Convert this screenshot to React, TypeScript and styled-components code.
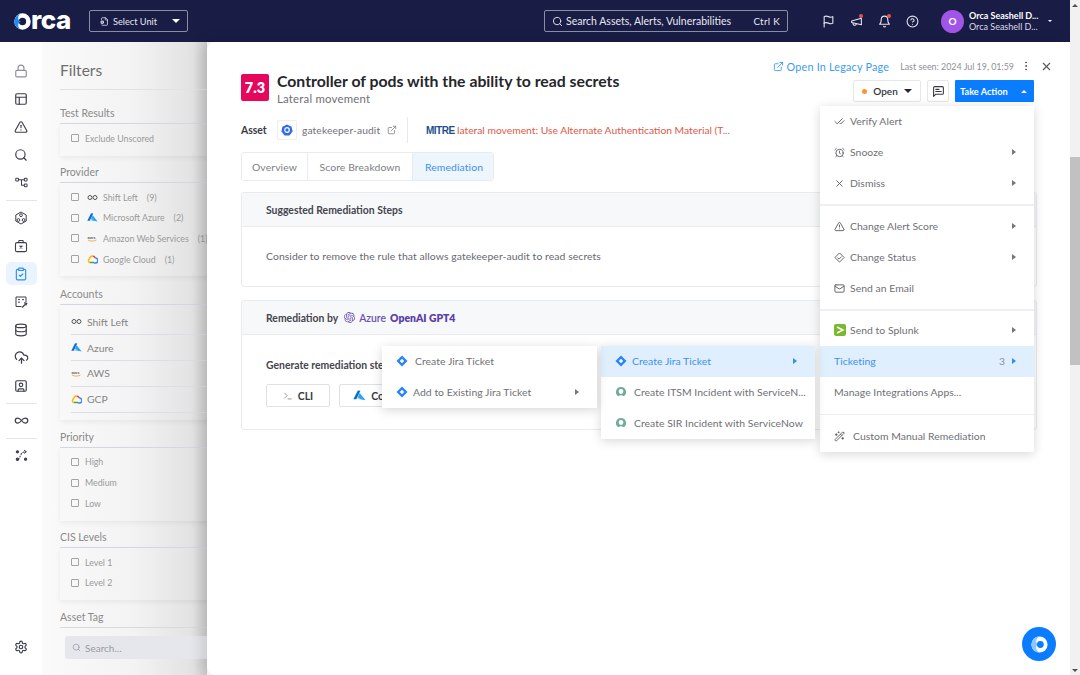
import React from "react";
import styled, { createGlobalStyle } from "styled-components";
import {
  LuLock,
  LuPanelsTopLeft,
  LuTriangleAlert,
  LuSearch,
  LuClipboardCheck,
  LuDatabase,
  LuCloudUpload,
  LuSquareUser,
  LuInfinity,
  LuSettings,
  LuFlag,
  LuMegaphone,
  LuBell,
  LuCircleHelp,
  LuExternalLink,
  LuEllipsisVertical,
  LuX,
  LuMessageSquareText,
  LuCheckCheck,
  LuAlarmClock,
  LuMail,
  LuWandSparkles,
  LuTerminal,
  LuFileCog,
} from "react-icons/lu";
import { SiOpenai } from "react-icons/si";

const font = `"Lato", "Noto Sans", sans-serif`;

const GlobalStyle = createGlobalStyle`
  html, body {
    margin: 0;
    height: 100%;
    overflow: hidden;
    background: #fff;
    font-family: ${font};
  }
  * { box-sizing: border-box; }
`;

const Page = styled.div`
  width: 1080px;
  height: 675px;
  display: flex;
  position: relative;
  overflow: hidden;
`;

const Main = styled.div`
  width: 1070px;
  flex: none;
  display: flex;
  flex-direction: column;
`;

const Scrollbar = styled.div`
  width: 10px;
  height: 675px;
  background: #f1f1f1;
  padding-top: 157px;
  position: relative;
  &::before,
  &::after {
    content: "";
    position: absolute;
    left: 2px;
    border-left: 3px solid transparent;
    border-right: 3px solid transparent;
  }
  &::before {
    top: 4px;
    border-bottom: 3px solid #505050;
  }
  &::after {
    bottom: 3px;
    border-top: 3px solid #505050;
  }
`;

const ScrollThumb = styled.div`
  width: 100%;
  height: 208px;
  background: #c1c1c1;
`;

const TopBar = styled.header`
  height: 42px;
  flex: none;
  background: #191c44;
  display: flex;
  align-items: center;
  padding: 0 0 0 14px;
  color: #fff;
`;

const LogoText = styled.div`
  display: flex;
  align-items: center;
  width: 75px;
  font-size: 26px;
  line-height: 26px;
  font-weight: 800;
  color: #fff;
  letter-spacing: -0.4px;
  font-family: "Inter", sans-serif;
  span {
    margin-top: -3px;
  }
`;

const UnitSelect = styled.div`
  width: 99px;
  height: 22px;
  border: 1px solid #8a8da6;
  border-radius: 2px;
  display: flex;
  align-items: center;
  padding: 0 7px 0 10px;
  gap: 4px;
  font-size: 9.2px;
  color: #e6e7ef;
  span:nth-child(2) {
    flex: 1;
  }
`;

const Caret = styled.span<{ $dir?: "down" | "up" | "right"; $color?: string; $size?: number }>`
  display: inline-block;
  width: 0;
  height: 0;
  flex: none;
  ${(p) => {
    const s = p.$size ?? 3;
    const c = p.$color ?? "#fff";
    if (p.$dir === "up")
      return `border-left:${s + 1}px solid transparent;border-right:${s + 1}px solid transparent;border-bottom:${s + 1}px solid ${c};`;
    if (p.$dir === "right")
      return `border-top:${s}px solid transparent;border-bottom:${s}px solid transparent;border-left:${s + 1}px solid ${c};`;
    return `border-left:${s + 1}px solid transparent;border-right:${s + 1}px solid transparent;border-top:${s + 1}px solid ${c};`;
  }}
`;

const SearchBox = styled.div`
  width: 244px;
  height: 22px;
  margin-left: 356px;
  border: 1px solid #8a8da6;
  border-radius: 2px;
  display: flex;
  align-items: center;
  padding: 0 7px;
  gap: 3px;
  font-size: 10.5px;
  color: #e8e9f0;
  span:last-child {
    margin-left: auto;
    font-size: 9.8px;
    letter-spacing: 0.3px;
  }
`;

const TopIcons = styled.div`
  display: flex;
  align-items: center;
  gap: 15px;
  margin-left: 34px;
  margin-right: 22px;
  color: #e4e5ee;
`;

const TopIcon = styled.span<{ $dot?: boolean }>`
  position: relative;
  display: flex;
  width: 13px;
  justify-content: center;
  ${(p) =>
    p.$dot &&
    `&::after{content:"";position:absolute;top:-1px;right:0;width:4px;height:4px;border-radius:50%;background:#e8534a;}`}
`;

const Avatar = styled.div`
  width: 23px;
  height: 23px;
  border-radius: 50%;
  background: #a055e6;
  font-size: 10px;
  font-weight: 700;
  display: flex;
  align-items: center;
  justify-content: center;
  margin-right: 5px;
`;

const UserBlock = styled.div`
  display: flex;
  flex-direction: column;
  width: 79px;
  font-size: 9px;
  line-height: 11px;
  strong {
    font-weight: 700;
  }
  span {
    color: #dadbe6;
  }
`;

const Body = styled.div`
  flex: 1;
  display: flex;
  min-height: 0;
`;

const SideNav = styled.nav`
  width: 42px;
  flex: none;
  background: #fff;
  display: flex;
  flex-direction: column;
  align-items: center;
  padding-top: 17px;
  position: relative;
  color: #3c3f4c;
`;

const NavItem = styled.div<{ $active?: boolean; $muted?: boolean }>`
  width: 31px;
  height: 23px;
  margin-bottom: 5px;
  border-radius: 5px;
  flex: none;
  display: flex;
  align-items: center;
  justify-content: center;
  background: ${(p) => (p.$active ? "#eaf4fe" : "transparent")};
  color: ${(p) => (p.$active ? "#2f8fef" : p.$muted ? "#8d8f99" : "#3c3f4c")};
`;

const NavRule = styled.div`
  width: 31px;
  height: 1px;
  background: #e3e5ee;
  flex: none;
  margin: 1px 0 5px;
`;

const NavBottom = styled.div`
  margin-top: auto;
  margin-bottom: 12px;
`;

const FilterPane = styled.aside`
  width: 165px;
  flex: none;
  overflow: hidden;
  padding: 18px 0 0 18px;
  background: linear-gradient(90deg, #fafafa 0%, #f3f3f3 55%, #e2e2e2 92%, #cfcfcf 100%);
  color: #8f8f8f;
`;

const FilterTitle = styled.div`
  font-size: 15.5px;
  color: #6e6e6e;
  line-height: 20px;
  width: 160px;
  padding-bottom: 9px;
  border-bottom: 1px solid #e2e2e6;
  margin-bottom: 16px;
`;

const GroupTitle = styled.div`
  font-size: 10.5px;
  color: #8a8a8a;
  line-height: 14px;
  width: 160px;
  padding-bottom: 3px;
  border-bottom: 1px solid #d7d8e2;
`;

const GroupCard = styled.div<{ $gap?: number }>`
  width: 190px;
  padding: 4px 0 7px 11px;
  margin-bottom: ${(p) => p.$gap ?? 10}px;
  box-shadow: 0 2px 5px rgba(0, 0, 0, 0.06);
`;

const CheckRow = styled.div`
  height: 20.7px;
  display: flex;
  align-items: center;
  gap: 5px;
  font-size: 8.8px;
  color: #9a9a9a;
  white-space: nowrap;
  em {
    font-style: normal;
    margin-left: 4px;
  }
`;

const Box = styled.span`
  width: 8px;
  height: 8px;
  flex: none;
  border: 1px solid #a3a3a3;
  border-radius: 1px;
  margin-right: 1px;
  background: #f8f8f8;
`;

const ProviderIcon = styled.span`
  width: 11px;
  margin-left: 2px;
  flex: none;
  display: flex;
  align-items: center;
  justify-content: center;
`;

const AccountRow = styled.div`
  height: 25.8px;
  display: flex;
  align-items: center;
  gap: 5px;
  font-size: 10.4px;
  color: #858585;
  border-bottom: 1px solid #dcdde5;
`;

const SearchField = styled.div`
  width: 150px;
  height: 23px;
  margin: 8px 0 0 5px;
  background: #e6e7ec;
  border-radius: 3px;
  display: flex;
  align-items: center;
  gap: 4px;
  padding: 0 7px;
  font-size: 10px;
  color: #9a9a9f;
`;

const Drawer = styled.main`
  flex: 1;
  min-width: 0;
  background: #fff;
  border-radius: 8px 0 0 8px;
  padding: 15px 33px 0 34px;
  box-shadow: -6px 0 14px rgba(0, 0, 0, 0.12);
  position: relative;
  color: #2b2b33;
`;

const DrawerTopLine = styled.div`
  display: flex;
  align-items: center;
  justify-content: flex-end;
  height: 18px;
  margin-right: -22px;
  gap: 0;
`;

const LegacyLink = styled.a`
  display: flex;
  align-items: center;
  gap: 3px;
  color: #3d9bf2;
  font-size: 10.8px;
  letter-spacing: 0.2px;
`;

const LastSeen = styled.span`
  font-size: 8.9px;
  color: #8f8f95;
  margin: 0 5px 0 11px;
`;

const IconBtn = styled.span`
  display: flex;
  color: #55565f;
  width: 14px;
  justify-content: center;
  margin-right: 6px;
`;

const HeadRow = styled.div`
  display: flex;
  justify-content: space-between;
  margin-top: -1px;
`;

const TitleWrap = styled.div`
  display: flex;
  gap: 8px;
`;

const TitleText = styled.div`
  margin-top: -2px;
`;

const ScoreBadge = styled.div`
  width: 28px;
  height: 27px;
  border-radius: 2px;
  background: #e6065c;
  color: #fff;
  font-size: 14.5px;
  font-weight: 800;
  display: flex;
  align-items: center;
  justify-content: center;
`;

const AlertTitle = styled.div`
  font-size: 15.8px;
  font-weight: 700;
  line-height: 18px;
  color: #25252c;
`;

const AlertSub = styled.div`
  font-size: 11.4px;
  line-height: 15px;
  margin-top: 1px;
  color: #6f6f76;
  letter-spacing: 0.2px;
`;

const Actions = styled.div`
  display: flex;
  gap: 6px;
  margin-top: 6px;
  margin-right: 3px;
  height: 22px;
`;

const OpenBtn = styled.div`
  width: 68px;
  border: 1px solid #e6e7ec;
  border-radius: 2px;
  display: flex;
  align-items: center;
  justify-content: center;
  gap: 6px;
  font-size: 10px;
  font-weight: 600;
  color: #33333b;
  i {
    width: 5px;
    height: 5px;
    border-radius: 50%;
    background: #f8943a;
  }
`;

const NoteBtn = styled.div`
  width: 22px;
  border: 1px solid #e6e7ec;
  border-radius: 2px;
  display: flex;
  align-items: center;
  justify-content: center;
  color: #3a3a42;
`;

const TakeAction = styled.div`
  width: 79px;
  background: #0a7cff;
  border-radius: 1px;
  color: #fff;
  font-size: 9.2px;
  font-weight: 700;
  display: flex;
  align-items: center;
  justify-content: space-between;
  padding: 0 7px 0 5px;
`;

const AssetRow = styled.div`
  display: flex;
  align-items: center;
  height: 26px;
  margin-top: 11px;
`;

const AssetLabel = styled.span`
  font-size: 10.4px;
  font-weight: 700;
  color: #3a3a42;
  width: 36px;
`;

const K8sBox = styled.span`
  width: 20px;
  height: 20px;
  border: 1px solid #eceef2;
  border-radius: 2px;
  display: flex;
  align-items: center;
  justify-content: center;
  margin-right: 5px;
`;

const AssetName = styled.span`
  font-size: 10.2px;
  color: #707077;
  width: 85px;
  letter-spacing: 0.15px;
`;

const RowDivider = styled.span`
  width: 1px;
  height: 26px;
  background: #e8e9ee;
  margin: 0 18px 0 10px;
`;

const MitreLogo = styled.span`
  font-size: 10px;
  font-weight: 900;
  color: #1c4f8f;
  letter-spacing: -0.5px;
  font-family: "Liberation Sans", sans-serif;
  width: 31px;
`;

const MitreText = styled.span`
  font-size: 10.3px;
  color: #db5a48;
  white-space: nowrap;
`;

const Tabs = styled.div`
  display: flex;
  width: 253px;
  height: 29px;
  margin-top: 9px;
  border: 1px solid #e9ebf0;
  border-radius: 3px;
  overflow: hidden;
`;

const Tab = styled.div<{ $active?: boolean; $w: number }>`
  width: ${(p) => p.$w}px;
  flex: none;
  display: flex;
  align-items: center;
  justify-content: center;
  font-size: 10.4px;
  letter-spacing: 0.1px;
  color: ${(p) => (p.$active ? "#3d8ff0" : "#7d7d84")};
  background: ${(p) => (p.$active ? "#edf5fd" : "#fff")};
  border-right: ${(p) => (p.$active ? "none" : "1px solid #e9ebf0")};
`;

const Card = styled.section<{ $h: number; $top: number }>`
  height: ${(p) => p.$h}px;
  margin-top: ${(p) => p.$top}px;
  border: 1px solid #e9ebf0;
  border-radius: 3px;
  overflow: hidden;
`;

const CardHead = styled.div`
  height: 34px;
  background: #f7f8fa;
  border-bottom: 1px solid #e9ebf0;
  padding-left: 24px;
  display: flex;
  align-items: center;
  gap: 6px;
  font-size: 10.4px;
  font-weight: 700;
  color: #45454d;
`;

const OpenAi = styled.span`
  display: flex;
  align-items: center;
  gap: 4px;
  color: #6a4fb8;
  font-weight: 600;
  b {
    font-weight: 800;
    color: #5b3fa8;
  }
`;

const CardText = styled.div`
  padding: 22px 0 0 24px;
  font-size: 10.4px;
  line-height: 14px;
  color: #67676f;
  letter-spacing: 0.08px;
`;

const GenTitle = styled.div`
  padding: 23px 0 0 24px;
  font-size: 10.4px;
  line-height: 14px;
  font-weight: 700;
  color: #45454d;
`;

const GenButtons = styled.div`
  display: flex;
  gap: 9px;
  padding: 12px 0 0 24px;
`;

const GenBtn = styled.div<{ $w: number }>`
  width: ${(p) => p.$w}px;
  height: 23px;
  border: 1px solid #dfe1e8;
  border-radius: 2px;
  display: flex;
  align-items: center;
  justify-content: center;
  gap: 5px;
  font-size: 10.4px;
  font-weight: 700;
  color: #3a3a42;
`;

const Menu = styled.div<{ $left: number; $top: number; $w: number }>`
  position: absolute;
  left: ${(p) => p.$left}px;
  top: ${(p) => p.$top}px;
  width: ${(p) => p.$w}px;
  background: #fff;
  box-shadow: 0 2px 10px rgba(0, 0, 0, 0.16);
  z-index: 5;
`;

const MenuItem = styled.div<{ $active?: boolean }>`
  height: 31px;
  display: flex;
  align-items: center;
  padding: 0 18px 1px 14px;
  font-size: 10.4px;
  letter-spacing: 0.04px;
  white-space: nowrap;
  color: ${(p) => (p.$active ? "#3d8ff0" : "#6f6f76")};
  background: ${(p) => (p.$active ? "#e0effd" : "transparent")};
`;

const MenuIcon = styled.span<{ $w?: number }>`
  width: ${(p) => p.$w ?? 16}px;
  flex: none;
  display: flex;
  align-items: center;
  color: #5b5b63;
`;

const MenuLabel = styled.span`
  flex: 1;
`;

const MenuCount = styled.span`
  color: #8f8f95;
  margin-right: 7px;
`;

const MenuRule = styled.div<{ $h?: number; $my?: number }>`
  height: ${(p) => p.$h ?? 1}px;
  background: #eeeff3;
  margin: ${(p) => p.$my ?? 6}px 0;
`;

const ChatFab = styled.div`
  position: absolute;
  left: 1022px;
  top: 627px;
  width: 34px;
  height: 34px;
  border-radius: 50%;
  background: #0a7cff;
  display: flex;
  align-items: center;
  justify-content: center;
  z-index: 6;
`;

const OrcaGlyph = ({ size }: { size: number }) => (
  <svg width={size} height={size} viewBox="0 0 20 20">
    <circle cx="10" cy="10" r="9.5" fill="#fff" />
    <path d="M10 .5a9.5 9.5 0 0 0 0 19 6 6 0 0 1-2.6-9.5A6 6 0 0 1 10 .5z" fill="#8cc6fb" />
    <circle cx="11" cy="10" r="4" fill="#0a7cff" />
  </svg>
);

const JiraIcon = ({ size = 12 }: { size?: number }) => (
  <svg width={size} height={size} viewBox="0 0 12 12">
    <path d="M6 .5 11.5 6 6 11.5.5 6z" fill="#2684ff" />
    <rect x="4.4" y="4.4" width="3.2" height="3.2" rx="0.4" transform="rotate(45 6 6)" fill="#fff" />
  </svg>
);

const SnowIcon = () => (
  <svg width="12" height="12" viewBox="0 0 12 12">
    <path
      d="M6 1a5 5 0 0 0-3.4 8.7c.4.3.9.4 1.3.1A3.6 3.6 0 0 1 6 9.2c.8 0 1.5.2 2.1.6.4.3 1 .2 1.3-.1A5 5 0 0 0 6 1zm0 6.9a2.4 2.4 0 1 1 0-4.8 2.4 2.4 0 0 1 0 4.8z"
      fill="#71ab96"
    />
  </svg>
);

const AzureIcon = ({ size = 11 }: { size?: number }) => (
  <svg width={size} height={size} viewBox="0 0 14 12">
    <path d="M5.2 0.6 0.4 10h3.2L8 1z" fill="#0a6ed1" />
    <path d="M7.2 3.2 5 8.2l3.2 1H3.4L13.6 11 7.2 3.2z" fill="#2aa4ee" />
  </svg>
);

const AwsIcon = () => (
  <svg width="11" height="9" viewBox="0 0 22 16">
    <text x="1" y="8" fontSize="8.5" fontWeight="700" fill="#666" fontFamily="Liberation Sans">
      aws
    </text>
    <path d="M2 11c5 3 11 3 17 0" stroke="#f29a2e" strokeWidth="1.6" fill="none" />
  </svg>
);

const GcpIcon = () => (
  <svg width="11" height="9" viewBox="0 0 22 16">
    <path d="M11 1a6 6 0 0 1 5.6 4" stroke="#ea4335" strokeWidth="3" fill="none" />
    <path d="M16.5 5A5 5 0 0 1 17 15h-3" stroke="#4285f4" strokeWidth="3" fill="none" />
    <path d="M14 14H6" stroke="#34a853" strokeWidth="3" fill="none" />
    <path d="M6 14.5A4.6 4.6 0 0 1 5.4 6 6 6 0 0 1 11 1" stroke="#fbbc05" strokeWidth="3" fill="none" />
  </svg>
);

const ShiftLeftIcon = () => (
  <svg width="11" height="7" viewBox="0 0 22 12" fill="none" stroke="#555" strokeWidth="2">
    <circle cx="6" cy="6" r="4" />
    <circle cx="16" cy="6" r="4" />
  </svg>
);

const SplunkIcon = () => (
  <svg width="12" height="12" viewBox="0 0 12 12">
    <rect width="12" height="12" rx="2" fill="#7cb82f" />
    <path d="M3 3l6 3-6 3" stroke="#fff" strokeWidth="1.4" fill="none" />
  </svg>
);

const K8sIcon = () => (
  <svg width="12" height="12" viewBox="0 0 12 12">
    <path d="M6 .5 10.6 2.8 11.6 7.6 8.4 11.5H3.6L.4 7.6 1.4 2.8z" fill="#326ce5" />
    <circle cx="6" cy="6" r="2.3" fill="none" stroke="#fff" strokeWidth="1.2" />
  </svg>
);

const StatusIcon = () => (
  <svg width="11" height="11" viewBox="0 0 12 12" fill="none" stroke="#5b5b63" strokeWidth="1">
    <path d="M6 1 11 6 6 11 1 6z" strokeLinejoin="round" />
    <path d="M3.8 6.2 5.5 7.8 8.2 5" />
  </svg>
);

const NodeFlowIcon = () => (
  <svg width="13" height="13" viewBox="0 0 14 14" fill="none" stroke="currentColor" strokeWidth="1.1">
    <rect x="0.8" y="2.5" width="3" height="3" rx="0.8" />
    <rect x="10" y="2.5" width="3" height="3" rx="0.8" />
    <rect x="10" y="8.5" width="3" height="3" rx="0.8" />
    <path d="M3.8 4H10M7 4v6h3" />
  </svg>
);

const HexNetIcon = () => (
  <svg width="14" height="14" viewBox="0 0 14 14" fill="none" stroke="currentColor" strokeWidth="1">
    <path d="M7 1 12.2 4v6L7 13 1.8 10V4z" strokeLinejoin="round" />
    <circle cx="7" cy="4.2" r="1.4" />
    <circle cx="4.4" cy="9" r="1.4" />
    <circle cx="9.6" cy="9" r="1.4" />
  </svg>
);

const BriefcaseXIcon = () => (
  <svg width="14" height="14" viewBox="0 0 14 14" fill="none" stroke="currentColor" strokeWidth="1.1">
    <rect x="1.5" y="3.6" width="11" height="9" rx="1.4" />
    <path d="M4.8 3.6V2.2c0-.4.3-.7.7-.7h3c.4 0 .7.3.7.7v1.4" />
    <path d="M5.6 6.8 8.4 9.4M8.4 6.8 5.6 9.4" strokeWidth="1.2" />
  </svg>
);

const ReportToolIcon = () => (
  <svg width="14" height="14" viewBox="0 0 14 14" fill="none" stroke="currentColor" strokeWidth="1">
    <path d="M7.5 11.5H2V2h10v5" />
    <path d="M4 4.6h2M4 7.2h2M8 4.6h2" />
    <path d="M8.2 12.6 11 9.4M10.2 7.8l2.4.6-1 2" strokeWidth="1.4" />
  </svg>
);

const RoutePathIcon = () => (
  <svg width="13" height="13" viewBox="0 0 14 14" fill="none" stroke="currentColor" strokeWidth="1.1">
    <path d="M3 11c3 0 2-8 8-8" strokeDasharray="2 1" />
    <circle cx="2.6" cy="11" r="1.3" fill="currentColor" />
    <path d="M9.8 1.2 12 3 9.8 4.8" />
    <circle cx="2.6" cy="3" r="1.2" fill="currentColor" />
    <circle cx="11.4" cy="11" r="1.2" fill="currentColor" />
  </svg>
);

const MenuArrow = ({ color = "#75757c" }: { color?: string }) => (
  <Caret $dir="right" $size={3} $color={color} />
);

export default function App() {
  const navTop = [
    { icon: <LuLock size={14} />, muted: true },
    { icon: <LuPanelsTopLeft size={14} /> },
    { icon: <LuTriangleAlert size={14} /> },
    { icon: <LuSearch size={14} /> },
    { icon: <NodeFlowIcon /> },
  ];
  const navMid = [
    { icon: <HexNetIcon /> },
    { icon: <BriefcaseXIcon /> },
    { icon: <LuClipboardCheck size={14} />, active: true },
    { icon: <ReportToolIcon /> },
    { icon: <LuDatabase size={14} /> },
    { icon: <LuCloudUpload size={15} /> },
    { icon: <LuSquareUser size={14} /> },
  ];

  return (
    <Page>
      <GlobalStyle />
      <Main>
        <TopBar>
          <LogoText>
            <svg width="17" height="17" viewBox="0 0 20 20">
              <circle cx="10" cy="10" r="7" fill="none" stroke="#fff" strokeWidth="5.4" />
              <path d="M10 .4a9.6 9.6 0 0 0 0 19.2 5 5 0 0 1-2-9.6 5 5 0 0 1 2-9.6z" fill="#1c8cf2" />
            </svg>
            <span>rca</span>
          </LogoText>
          <UnitSelect>
            <LuFileCog size={9} />
            <span>Select Unit</span>
            <Caret />
          </UnitSelect>
          <SearchBox>
            <LuSearch size={11} />
            <span>Search Assets, Alerts, Vulnerabilities</span>
            <span>Ctrl K</span>
          </SearchBox>
          <TopIcons>
            <TopIcon>
              <LuFlag size={13} />
            </TopIcon>
            <TopIcon $dot>
              <LuMegaphone size={13} />
            </TopIcon>
            <TopIcon $dot>
              <LuBell size={13} />
            </TopIcon>
            <TopIcon>
              <LuCircleHelp size={13} />
            </TopIcon>
          </TopIcons>
          <Avatar>O</Avatar>
          <UserBlock>
            <strong>Orca Seashell D...</strong>
            <span>Orca Seashell D...</span>
          </UserBlock>
          <Caret $size={1.5} />
        </TopBar>
        <Body>
          <SideNav>
            {navTop.map((n, i) => (
              <NavItem key={i} $muted={n.muted}>
                {n.icon}
              </NavItem>
            ))}
            <NavRule />
            {navMid.map((n, i) => (
              <NavItem key={i} $active={n.active}>
                {n.icon}
              </NavItem>
            ))}
            <NavRule />
            <NavItem>
              <LuInfinity size={15} />
            </NavItem>
            <NavRule />
            <NavItem>
              <RoutePathIcon />
            </NavItem>
            <NavBottom>
              <NavItem>
                <LuSettings size={14} />
              </NavItem>
            </NavBottom>
          </SideNav>

          <FilterPane>
            <FilterTitle>Filters</FilterTitle>
            <GroupTitle>Test Results</GroupTitle>
            <GroupCard $gap={9}>
              <CheckRow>
                <Box />
                Exclude Unscored
              </CheckRow>
            </GroupCard>
            <GroupTitle>Provider</GroupTitle>
            <GroupCard $gap={11}>
              <CheckRow>
                <Box />
                <ProviderIcon>
                  <ShiftLeftIcon />
                </ProviderIcon>
                Shift Left <em>(9)</em>
              </CheckRow>
              <CheckRow>
                <Box />
                <ProviderIcon>
                  <AzureIcon />
                </ProviderIcon>
                Microsoft Azure <em>(2)</em>
              </CheckRow>
              <CheckRow>
                <Box />
                <ProviderIcon>
                  <AwsIcon />
                </ProviderIcon>
                Amazon Web Services <em>(1)</em>
              </CheckRow>
              <CheckRow>
                <Box />
                <ProviderIcon>
                  <GcpIcon />
                </ProviderIcon>
                Google Cloud <em>(1)</em>
              </CheckRow>
            </GroupCard>
            <GroupTitle>Accounts</GroupTitle>
            <GroupCard>
              <AccountRow>
                <ShiftLeftIcon />
                Shift Left
              </AccountRow>
              <AccountRow>
                <AzureIcon />
                Azure
              </AccountRow>
              <AccountRow>
                <AwsIcon />
                AWS
              </AccountRow>
              <AccountRow>
                <GcpIcon />
                GCP
              </AccountRow>
            </GroupCard>
            <GroupTitle>Priority</GroupTitle>
            <GroupCard $gap={9}>
              <CheckRow>
                <Box />
                High
              </CheckRow>
              <CheckRow>
                <Box />
                Medium
              </CheckRow>
              <CheckRow>
                <Box />
                Low
              </CheckRow>
            </GroupCard>
            <GroupTitle>CIS Levels</GroupTitle>
            <GroupCard>
              <CheckRow>
                <Box />
                Level 1
              </CheckRow>
              <CheckRow>
                <Box />
                Level 2
              </CheckRow>
            </GroupCard>
            <GroupTitle>Asset Tag</GroupTitle>
            <SearchField>
              <LuSearch size={9} />
              Search...
            </SearchField>
          </FilterPane>

          <Drawer>
            <DrawerTopLine>
              <LegacyLink>
                <LuExternalLink size={11} />
                Open In Legacy Page
              </LegacyLink>
              <LastSeen>Last seen: 2024 Jul 19, 01:59</LastSeen>
              <IconBtn>
                <LuEllipsisVertical size={12} />
              </IconBtn>
              <IconBtn>
                <LuX size={13} />
              </IconBtn>
            </DrawerTopLine>
            <HeadRow>
              <TitleWrap>
                <ScoreBadge>7.3</ScoreBadge>
                <TitleText>
                  <AlertTitle>Controller of pods with the ability to read secrets</AlertTitle>
                  <AlertSub>Lateral movement</AlertSub>
                </TitleText>
              </TitleWrap>
              <Actions>
                <OpenBtn>
                  <i />
                  Open
                  <Caret $color="#26262e" />
                </OpenBtn>
                <NoteBtn>
                  <LuMessageSquareText size={13} />
                </NoteBtn>
                <TakeAction>
                  Take Action
                  <Caret $dir="up" $size={2} />
                </TakeAction>
              </Actions>
            </HeadRow>
            <AssetRow>
              <AssetLabel>Asset</AssetLabel>
              <K8sBox>
                <K8sIcon />
              </K8sBox>
              <AssetName>gatekeeper-audit</AssetName>
              <LuExternalLink size={10} color="#85858c" />
              <RowDivider />
              <MitreLogo>MITRE</MitreLogo>
              <MitreText>lateral movement: Use Alternate Authentication Material (T...</MitreText>
            </AssetRow>
            <Tabs>
              <Tab $w={66}>Overview</Tab>
              <Tab $w={105}>Score Breakdown</Tab>
              <Tab $w={82} $active>
                Remediation
              </Tab>
            </Tabs>
            <Card $h={95} $top={11}>
              <CardHead>Suggested Remediation Steps</CardHead>
              <CardText>Consider to remove the rule that allows gatekeeper-audit to read secrets</CardText>
            </Card>
            <Card $h={130} $top={13}>
              <CardHead>
                Remediation by
                <OpenAi>
                  <SiOpenai size={11} />
                  Azure <b>OpenAI GPT4</b>
                </OpenAi>
              </CardHead>
              <GenTitle>Generate remediation steps</GenTitle>
              <GenButtons>
                <GenBtn $w={64}>
                  <LuTerminal size={10} color="#85858c" />
                  CLI
                </GenBtn>
                <GenBtn $w={84}>
                  <AzureIcon size={13} />
                  Console
                </GenBtn>
              </GenButtons>
            </Card>
          </Drawer>
        </Body>
      </Main>
      <Scrollbar>
        <ScrollThumb />
      </Scrollbar>

      <Menu $left={820} $top={106} $w={214}>
        <MenuItem>
          <MenuIcon>
            <LuCheckCheck size={11} />
          </MenuIcon>
          <MenuLabel>Verify Alert</MenuLabel>
        </MenuItem>
        <MenuItem>
          <MenuIcon>
            <LuAlarmClock size={11} />
          </MenuIcon>
          <MenuLabel>Snooze</MenuLabel>
          <MenuArrow />
        </MenuItem>
        <MenuItem>
          <MenuIcon>
            <LuX size={11} />
          </MenuIcon>
          <MenuLabel>Dismiss</MenuLabel>
          <MenuArrow />
        </MenuItem>
        <MenuRule $h={2} $my={5} />
        <MenuItem>
          <MenuIcon>
            <LuTriangleAlert size={11} />
          </MenuIcon>
          <MenuLabel>Change Alert Score</MenuLabel>
          <MenuArrow />
        </MenuItem>
        <MenuItem>
          <MenuIcon>
            <StatusIcon />
          </MenuIcon>
          <MenuLabel>Change Status</MenuLabel>
          <MenuArrow />
        </MenuItem>
        <MenuItem>
          <MenuIcon>
            <LuMail size={11} />
          </MenuIcon>
          <MenuLabel>Send an Email</MenuLabel>
        </MenuItem>
        <MenuRule $h={2} $my={4.5} />
        <MenuItem>
          <MenuIcon>
            <SplunkIcon />
          </MenuIcon>
          <MenuLabel>Send to Splunk</MenuLabel>
          <MenuArrow />
        </MenuItem>
        <MenuItem $active>
          <MenuLabel>Ticketing</MenuLabel>
          <MenuCount>3</MenuCount>
          <MenuArrow color="#2f8fef" />
        </MenuItem>
        <MenuItem>
          <MenuLabel>Manage Integrations Apps...</MenuLabel>
        </MenuItem>
        <MenuRule $my={6} />
        <MenuItem>
          <MenuIcon $w={19}>
            <LuWandSparkles size={11} />
          </MenuIcon>
          <MenuLabel>Custom Manual Remediation</MenuLabel>
        </MenuItem>
      </Menu>

      <Menu $left={601} $top={346} $w={214}>
        <MenuItem $active>
          <MenuIcon $w={17}>
            <JiraIcon />
          </MenuIcon>
          <MenuLabel>Create Jira Ticket</MenuLabel>
          <MenuArrow color="#2f8fef" />
        </MenuItem>
        <MenuItem>
          <MenuIcon $w={19}>
            <SnowIcon />
          </MenuIcon>
          <MenuLabel>Create ITSM Incident with ServiceN...</MenuLabel>
        </MenuItem>
        <MenuItem>
          <MenuIcon $w={19}>
            <SnowIcon />
          </MenuIcon>
          <MenuLabel>Create SIR Incident with ServiceNow</MenuLabel>
        </MenuItem>
      </Menu>

      <Menu $left={382} $top={346} $w={215}>
        <MenuItem>
          <MenuIcon $w={19}>
            <JiraIcon />
          </MenuIcon>
          <MenuLabel>Create Jira Ticket</MenuLabel>
        </MenuItem>
        <MenuItem>
          <MenuIcon $w={17}>
            <JiraIcon />
          </MenuIcon>
          <MenuLabel>Add to Existing Jira Ticket</MenuLabel>
          <MenuArrow />
        </MenuItem>
      </Menu>

      <ChatFab>
        <OrcaGlyph size={17} />
      </ChatFab>
    </Page>
  );
}
